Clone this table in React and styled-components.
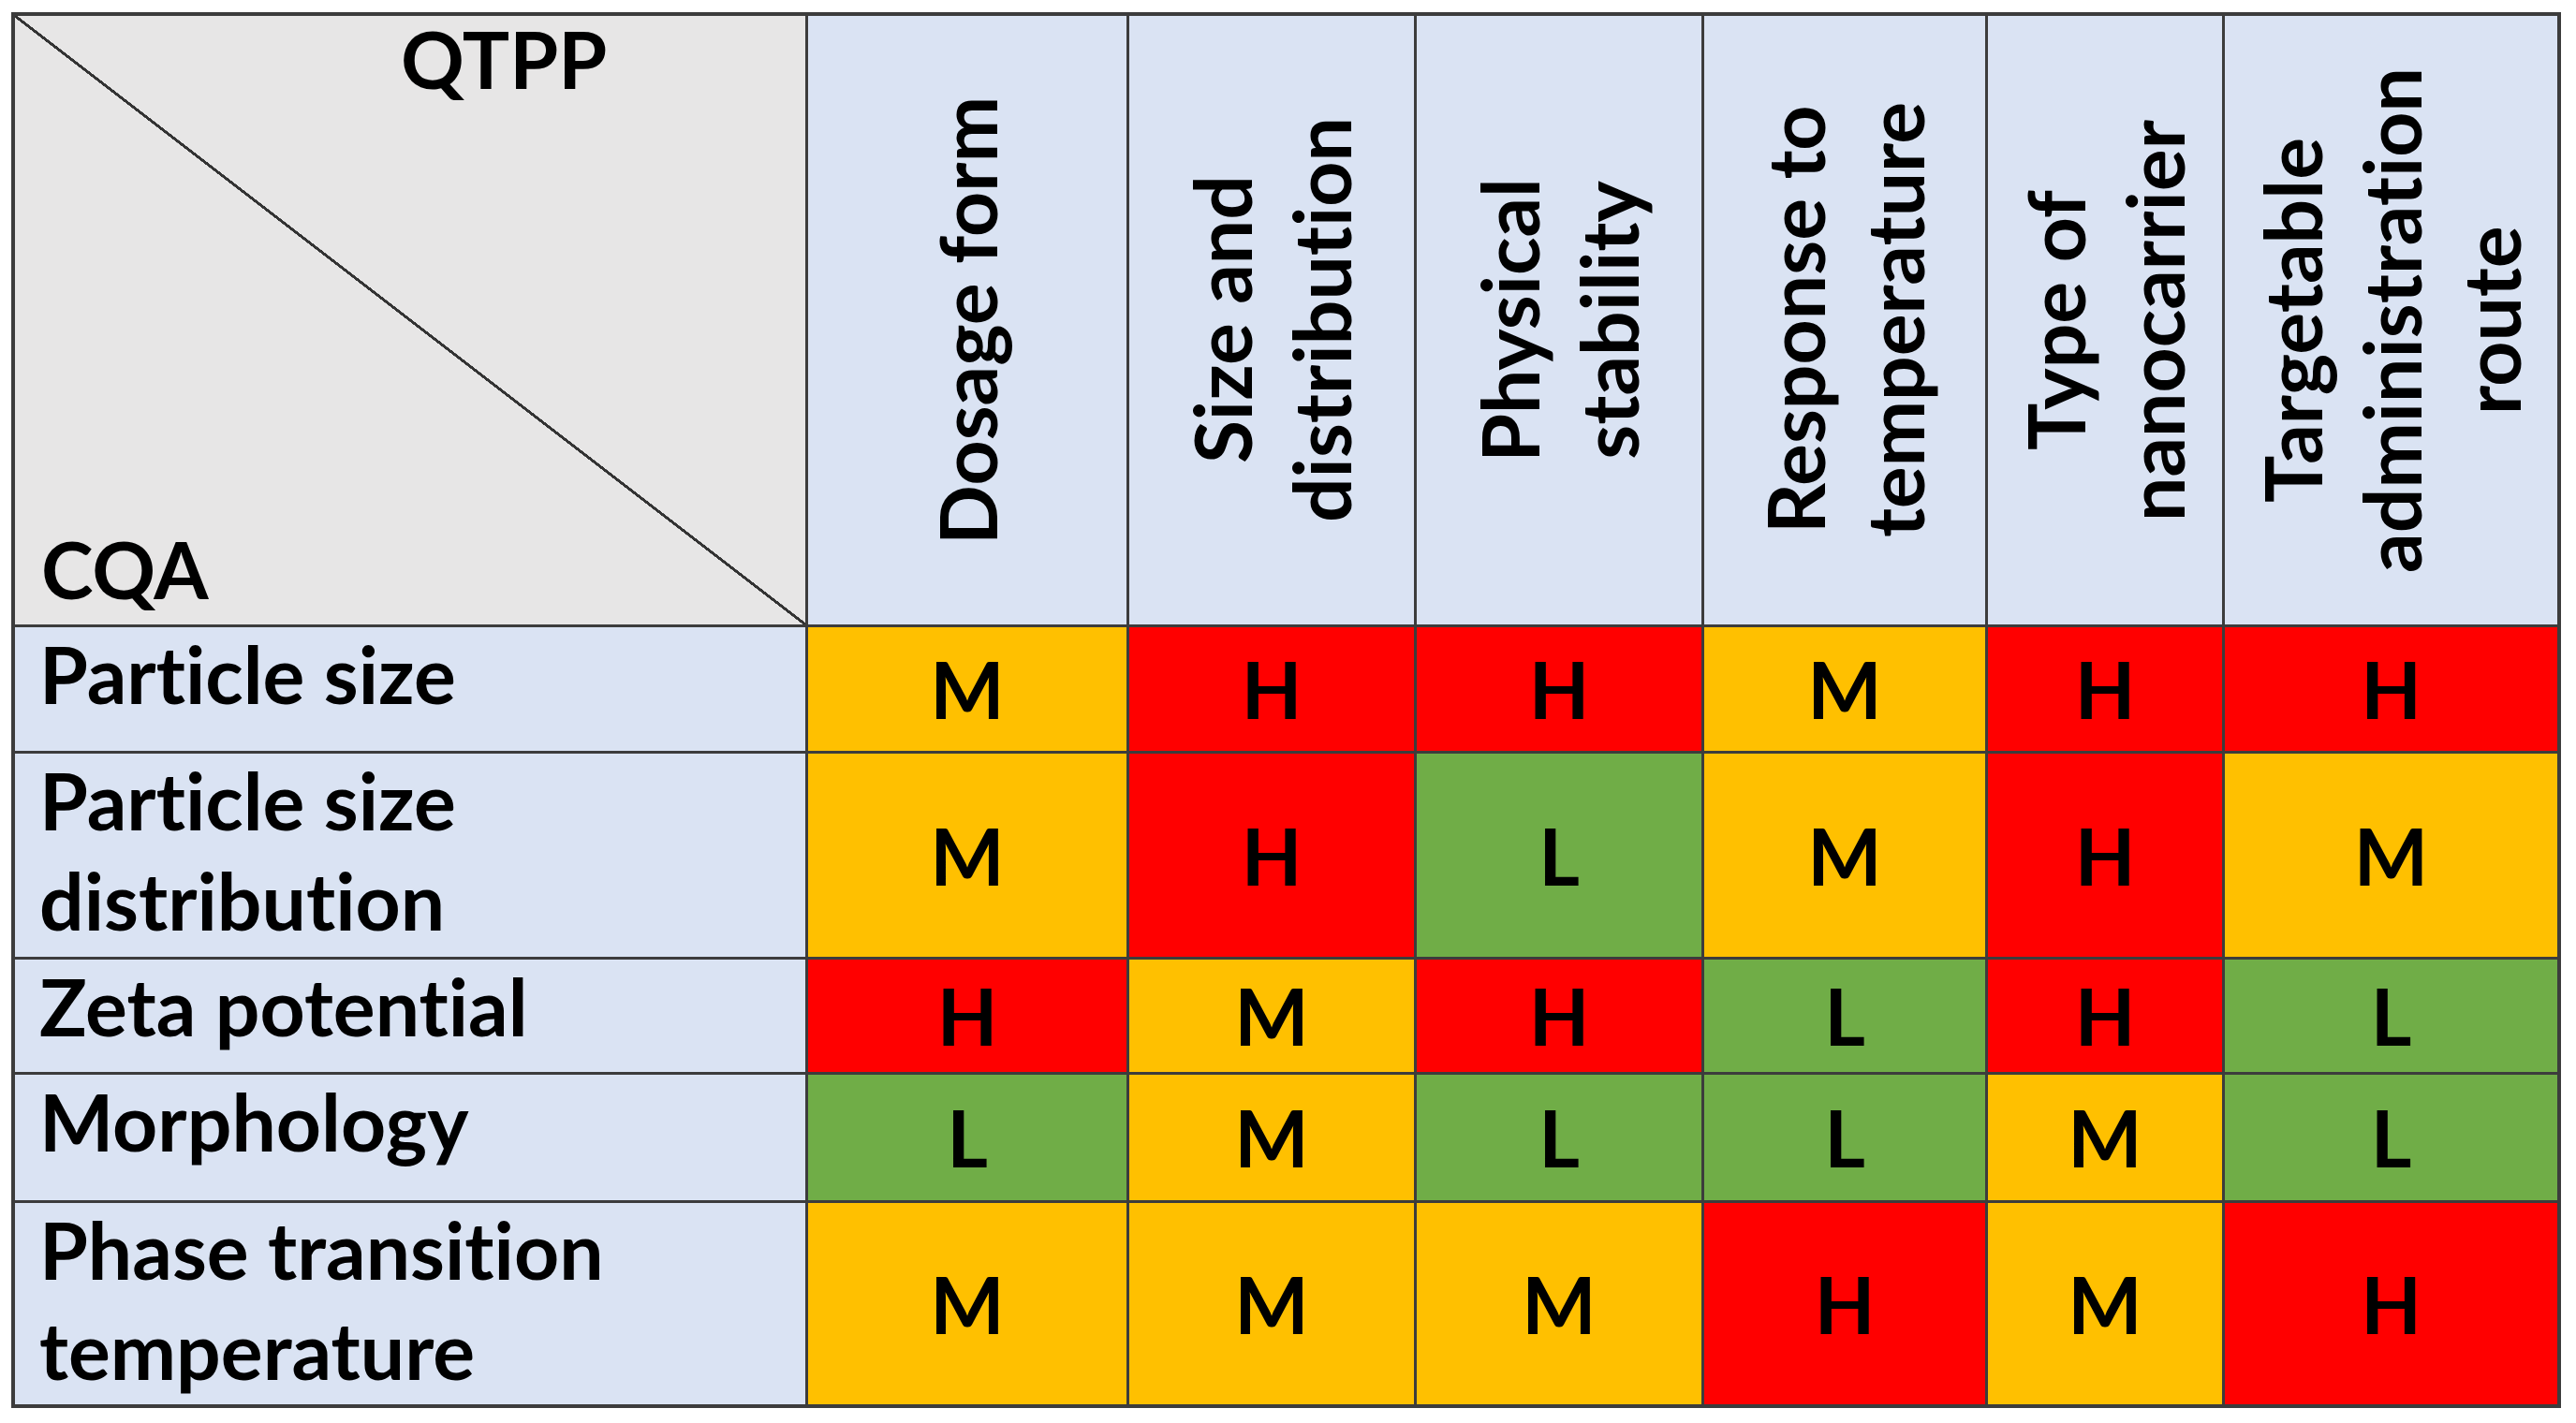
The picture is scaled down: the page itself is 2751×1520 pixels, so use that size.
import styled, { createGlobalStyle } from 'styled-components'

const GlobalStyle = createGlobalStyle`
  body {
    margin: 0;
    background: #ffffff;
    font-family: Lato, "Liberation Sans", sans-serif;
    font-variant-ligatures: none;
    color: #000;
  }
`

const COLORS = {
  H: '#ff0000',
  M: '#ffc000',
  L: '#70ad47',
}

const qtpp = [
  ['Dosage form'],
  ['Size and', 'distribution'],
  ['Physical', 'stability'],
  ['Response to', 'temperature'],
  ['Type of', 'nanocarrier'],
  ['Targetable', 'administration', 'route'],
]

const cqa = [
  { label: ['Particle size'], values: ['M', 'H', 'H', 'M', 'H', 'H'] },
  { label: ['Particle size', 'distribution'], values: ['M', 'H', 'L', 'M', 'H', 'M'] },
  { label: ['Zeta potential'], values: ['H', 'M', 'H', 'L', 'H', 'L'] },
  { label: ['Morphology'], values: ['L', 'M', 'L', 'L', 'M', 'L'] },
  { label: ['Phase transition', 'temperature'], values: ['M', 'M', 'M', 'H', 'M', 'H'] },
]

const Table = styled.div`
  display: grid;
  grid-template-columns: 844px 340px 304px 304px 300px 250px 355px;
  grid-template-rows: 650px 132px 217px 120px 134px 215px;
  gap: 3px;
  padding: 4px;
  width: max-content;
  margin: 13px 0 0 12px;
  background: #3c3c3c;
  font-size: 84px;
  font-weight: 700;
`

const Corner = styled.div`
  display: flex;
  flex-direction: column;
  justify-content: space-between;
  background-color: #e7e6e6;
  background-image: linear-gradient(
    to top right,
    transparent calc(50% - 1.6px),
    #333 calc(50% - 1.4px),
    #333 calc(50% + 1.4px),
    transparent calc(50% + 1.6px)
  );
`

const CornerLabel = styled.span`
  line-height: 1;
  padding: ${(p) => p.$pad};
`

const HeadCell = styled.div`
  display: flex;
  align-items: center;
  justify-content: center;
  background: #dae3f3;
`

const Vertical = styled.span`
  writing-mode: vertical-rl;
  transform: rotate(180deg);
  text-align: center;
  line-height: 1.26;
`

const RowLabel = styled.div`
  display: flex;
  align-items: flex-start;
  padding-left: 26px;
  background: #dae3f3;
`

const LabelText = styled.span`
  line-height: 1.27;
  margin-top: -3px;
`

const Risk = styled.div`
  display: flex;
  align-items: center;
  justify-content: center;
  background: ${(p) => COLORS[p.$level]};
  line-height: 1;
`

function Lines({ lines }) {
  return lines.map((line, i) => (
    <span key={line}>
      {i > 0 && <br />}
      {line}
    </span>
  ))
}

export default function App() {
  return (
    <>
      <GlobalStyle />
      <Table>
        <Corner>
          <CornerLabel $pad="4px 0 0 412px">QTPP</CornerLabel>
          <CornerLabel $pad="0 0 17px 28px">CQA</CornerLabel>
        </Corner>
        {qtpp.map((lines) => (
          <HeadCell key={lines.join(' ')}>
            <Vertical>
              <Lines lines={lines} />
            </Vertical>
          </HeadCell>
        ))}
        {cqa.map((row) => [
          <RowLabel key={row.label.join(' ')}>
            <LabelText>
              <Lines lines={row.label} />
            </LabelText>
          </RowLabel>,
          ...row.values.map((v, i) => (
            <Risk key={row.label.join(' ') + i} $level={v}>
              {v}
            </Risk>
          )),
        ])}
      </Table>
    </>
  )
}
